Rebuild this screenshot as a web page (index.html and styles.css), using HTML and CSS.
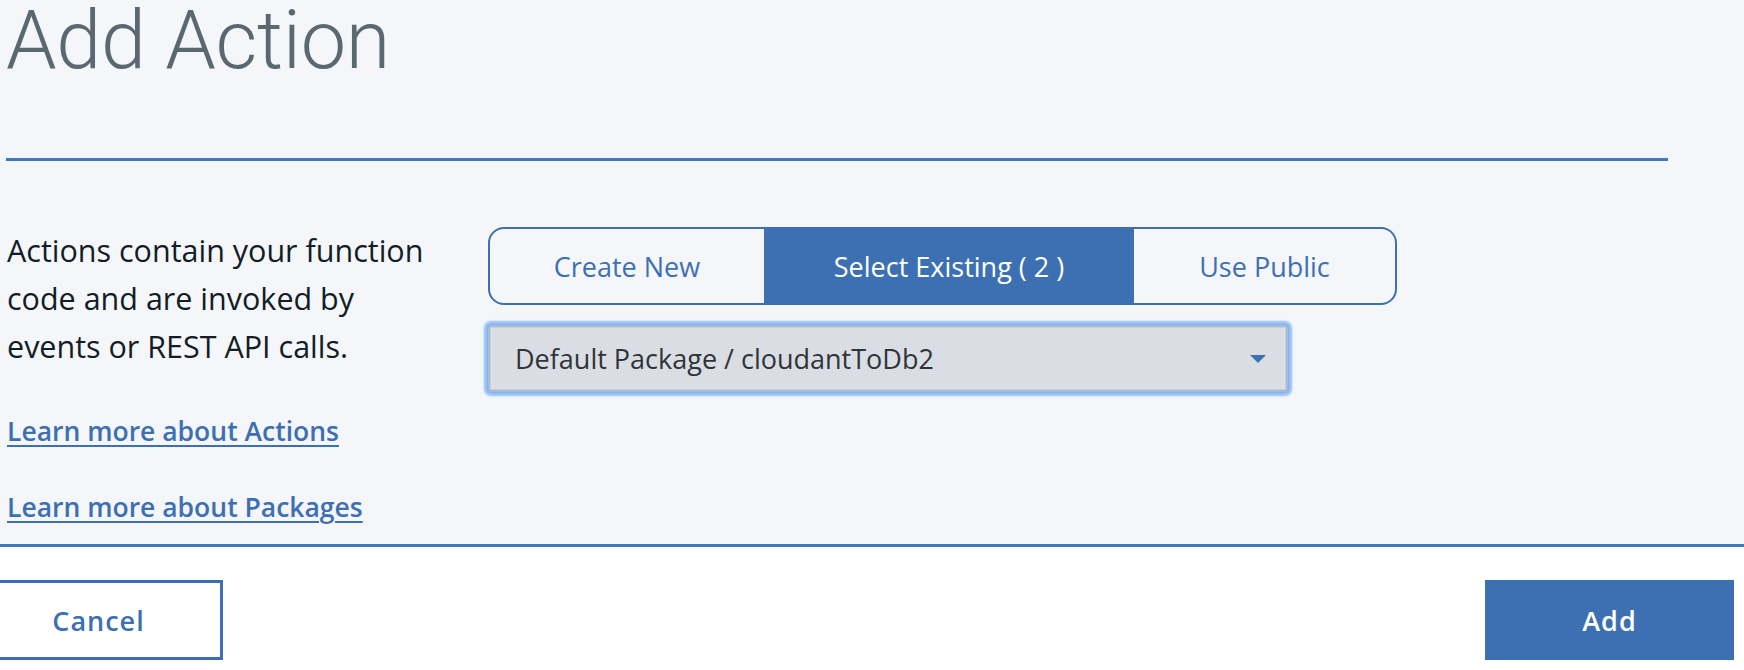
FILE: index.html
```html
<!DOCTYPE html>
<html lang="en">
<head>
<meta charset="utf-8">
<title>Add Action</title>
<link rel="stylesheet" href="styles.css">
</head>
<body>
<div class="modal">
  <div class="modal-body">
    <h1 class="title">Add Action</h1>
    <div class="rule"></div>
    <div class="content">
      <div class="info">
        <p class="desc">Actions contain your function code and are invoked by events or REST API calls.</p>
        <a class="link link-actions" href="#">Learn more about Actions</a>
        <a class="link link-packages" href="#">Learn more about Packages</a>
      </div>
      <div class="controls">
        <div class="tabs">
          <button class="tab">Create New</button>
          <button class="tab tab-selected">Select Existing ( 2 )</button>
          <button class="tab">Use Public</button>
        </div>
        <div class="select">
          <span class="select-value">Default Package / cloudantToDb2</span>
          <svg class="caret" width="16" height="8" viewBox="0 0 16 8" aria-hidden="true"><path d="M0 0H16L8 8Z"/></svg>
        </div>
      </div>
    </div>
  </div>
  <div class="modal-footer">
    <button class="btn btn-secondary">Cancel</button>
    <button class="btn btn-primary">Add</button>
  </div>
</div>
</body>
</html>
```

FILE: styles.css
```css
* {
  box-sizing: border-box;
}

html, body {
  margin: 0;
  padding: 0;
  background: #ffffff;
}

body {
  font-family: "Open Sans", "Noto Sans", "Liberation Sans", sans-serif;
  color: #152935;
  overflow: hidden;
  width: 1744px;
  height: 670px;
}

.modal {
  display: flex;
  flex-direction: column;
  height: 670px;
}

.modal-body {
  height: 547px;
  background: #f4f6fa;
  border-bottom: 3px solid #4178be;
  padding-left: 6px;
  display: flex;
  flex-direction: column;
}

.title {
  margin: 0;
  font-family: "Roboto", "Open Sans", sans-serif;
  font-weight: 300;
  font-size: 81px;
  line-height: 82px;
  height: 82px;
  color: #5a6872;
  letter-spacing: -0.3px;
}

.rule {
  margin-top: 76px;
  width: 1662px;
  height: 3px;
  background: #4178be;
}

.content {
  margin-top: 65px;
  display: flex;
  align-items: flex-start;
}

.info {
  width: 482px;
  padding-left: 1px;
  display: flex;
  flex-direction: column;
  align-items: flex-start;
}

.desc {
  margin: 0;
  width: 440px;
  font-size: 30.5px;
  line-height: 48px;
  color: #121d26;
}

.link {
  font-size: 26.5px;
  font-weight: 600;
  line-height: 40px;
  color: #3d70b2;
  text-decoration: underline;
  text-decoration-thickness: 2px;
  text-underline-offset: 4px;
}

.link-actions {
  margin-top: 41px;
}

.link-packages {
  margin-top: 36px;
}

.controls {
  padding-top: 1px;
  display: flex;
  flex-direction: column;
  gap: 20px;
}

.tabs {
  display: grid;
  grid-template-columns: 274px 370px 261px;
  width: 909px;
  height: 78px;
  border: 2px solid #3d70b2;
  border-radius: 16px;
  overflow: hidden;
  background: #f4f6fa;
}

.tab {
  border: 0;
  margin: 0;
  padding: 0;
  background: transparent;
  font-family: "Open Sans", "Noto Sans", sans-serif;
  font-size: 27px;
  color: #3d70b2;
  display: flex;
  align-items: center;
  justify-content: center;
}

.tab-selected {
  background: #3d70b2;
  color: #ffffff;
}

.select {
  width: 800px;
  height: 67px;
  background: #dadee4;
  border: 2px solid #a9bbd0;
  border-radius: 3px;
  box-shadow:
    inset 0 0 0 1px #c9d0d9,
    0 0 0 1px #7fb4f2,
    0 0 2px 4px rgba(110, 170, 245, 0.7);
  display: flex;
  align-items: center;
  justify-content: space-between;
  padding: 0 20px 0 25px;
}

.select-value {
  font-size: 27px;
  color: #2f3438;
}

.caret {
  fill: #3d70b2;
  display: block;
}

.modal-footer {
  flex: 1;
  background: #ffffff;
  display: flex;
  justify-content: space-between;
  align-items: flex-start;
  padding: 33px 10px 0 0;
}

.btn {
  width: 249px;
  height: 80px;
  font-family: "Open Sans", "Noto Sans", sans-serif;
  font-size: 27px;
  font-weight: 600;
  letter-spacing: 1px;
  margin: 0;
  padding: 0;
  display: flex;
  align-items: center;
  justify-content: center;
}

.btn-secondary {
  margin-left: -26px;
  background: #ffffff;
  color: #3d70b2;
  border: 3px solid #3d70b2;
}

.btn-primary {
  background: #3d70b2;
  color: #ffffff;
  border: 0;
}
```
